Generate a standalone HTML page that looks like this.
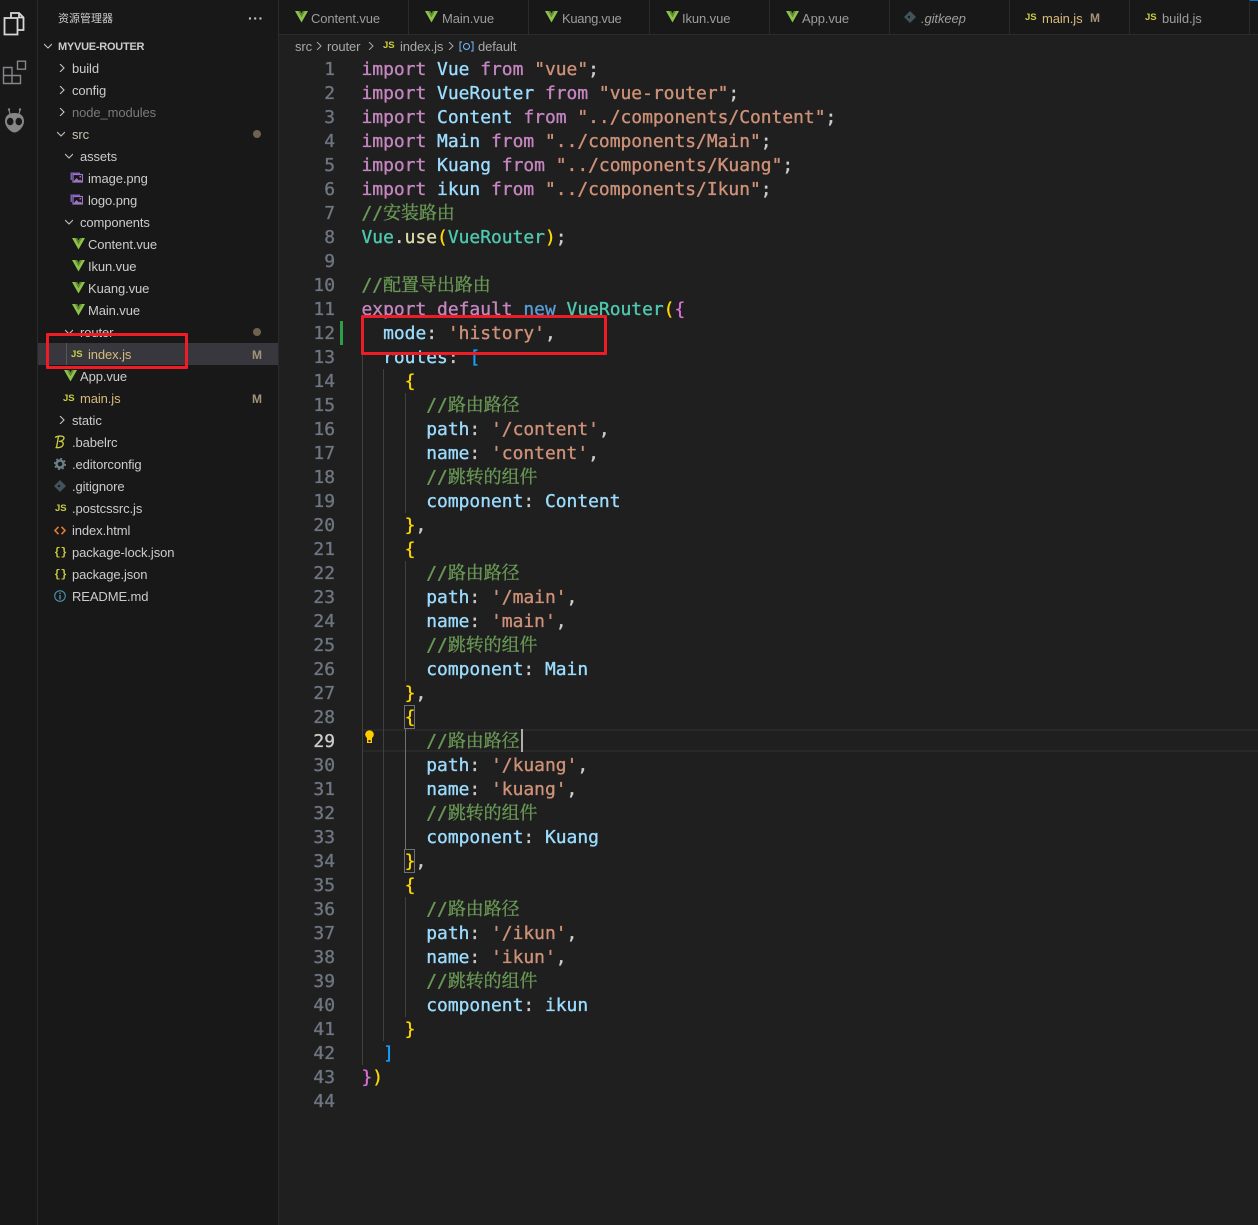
<!DOCTYPE html>
<html><head><meta charset="utf-8"><style>
html,body{margin:0;padding:0;background:#1f1f1f}
#w{position:relative;width:1258px;height:1225px;overflow:hidden;background:#1f1f1f;font-family:"Liberation Sans","Noto Sans CJK SC",sans-serif}
#ab{position:absolute;left:0;top:0;width:37px;height:1225px;background:#181818;border-right:1px solid #2b2b2b}
#sb{position:absolute;left:38px;top:0;width:240px;height:1225px;background:#181818;border-right:1px solid #2b2b2b}
.r{position:absolute;height:22px;line-height:24px;font-size:13px;color:#ccc;white-space:pre;letter-spacing:-.1px}
.a{position:absolute;width:8px;height:8px}
.t{position:absolute;top:0;height:34px;line-height:37px;font-size:13px;color:#9d9d9d;white-space:pre;letter-spacing:-.1px}
.sep{position:absolute;top:0;width:1px;height:34px;background:#2b2b2b}
.js{position:absolute;font:bold 9.5px/12px "Liberation Sans",sans-serif;color:#cbcb41;white-space:pre}
.ic{position:absolute}
.l{position:absolute;left:361.500px;height:24px;line-height:26px;font-family:"DejaVu Sans Mono","Noto Serif CJK SC",monospace;font-size:17.93px;white-space:pre;color:#ccc;-webkit-text-stroke:.35px}
.n{position:absolute;left:295px;width:40px;text-align:right;height:24px;line-height:26px;font-family:"DejaVu Sans Mono",monospace;font-size:17.93px;color:#6e7681;-webkit-text-stroke:.35px}
.g{position:absolute;width:1px;background:#404040}
.k{color:#c586c0}.v{color:#9cdcfe}.s{color:#ce9178}.c{color:#6a9955}.f{color:#4ec9b0}.y{color:#dcdcaa}.o{color:#ffd700}.m{color:#da70d6}.b{color:#179fff}.w{color:#569cd6}.d{color:#ccc}
.red{position:absolute;border:3px solid #ee1c25;box-sizing:border-box;border-radius:1px}
.dot{position:absolute;width:8px;height:8px;border-radius:50%;background:#6f6250;left:253px}
.M{position:absolute;left:252px;font:bold 12px/24px "Liberation Sans",sans-serif;color:#a39478}
</style></head><body><div id="w">
<svg width="0" height="0" style="position:absolute"><defs>
<g id="vue"><path d="M0 0H3.200L6.500 6 9.800 0H13L6.500 11.500Z" fill="#8dc149"/><path d="M3.200 0H5.200L6.500 2.500 7.800 0H9.800L6.500 6Z" fill="#5f8a2f"/></g>
<path id="chr" d="M2 0L6 4 2 8" fill="none" stroke="#c5c5c5" stroke-width="1.100"/>
<path id="chd" d="M0 2L4 6 8 2" fill="none" stroke="#c5c5c5" stroke-width="1.100"/>
<g id="img"><path d="M.5 .5H10V2H2V8H.5Z" fill="#7a5fc0"/><rect x="3" y="2.500" width="9.500" height="7.500" fill="none" stroke="#a074c4" stroke-width="1.200"/><path d="M3.500 9.500L6.500 6 9 8.500 10 7.500 12.500 9.500Z" fill="#a074c4"/><rect x="9.500" y="4" width="1.500" height="1.500" fill="#a074c4"/></g>
<g id="git"><path d="M6 0L12 6 6 12 0 6Z" fill="#41535b"/><circle cx="5" cy="6" r="1.200" fill="#181818"/></g>
</defs></svg>

<div id="ab">
<svg class="ic" style="left:3px;top:11px" width="24" height="26" viewBox="0 0 24 26" fill="none" stroke="#d7d7d7" stroke-width="1.800"><path d="M8 7V2H16L20.500 6.500V19H14.500"/><path d="M16 2V6.500H20.500"/><path d="M1.500 7H14.500V23.500H1.500Z"/></svg>
<svg class="ic" style="left:2px;top:60px" width="25" height="25" viewBox="0 0 25 25" fill="none" stroke="#85858a" stroke-width="1.400"><path d="M1.500 7.500H10V23.500H1.500ZM1.500 15.500H18.500V23.500H10"/><rect x="15.500" y="1.200" width="8" height="8"/></svg>
<svg class="ic" style="left:4px;top:107px" width="21" height="26" viewBox="0 0 21 26"><path d="M10.500 6C16 6 20 8.500 20 14.500C20 20 14 25.500 10.500 25.500C7 25.500 1 20 1 14.500C1 8.500 5 6 10.500 6Z" fill="#868686"/><ellipse cx="6.200" cy="14.500" rx="3.300" ry="3.800" fill="#181818"/><ellipse cx="14.800" cy="14.500" rx="3.300" ry="3.800" fill="#181818"/><path d="M6 7L5 3M15 7L16 3" stroke="#868686" stroke-width="1.200"/><circle cx="5" cy="2.500" r="1.200" fill="#868686"/><circle cx="16" cy="2.500" r="1.200" fill="#868686"/></svg>
</div>

<div id="sb"></div>
<div class="r" style="left:58px;top:7px;font-size:11px;letter-spacing:0">资源管理器</div>
<div class="r" style="left:248px;top:6px;font-size:14px;font-weight:bold;letter-spacing:.6px">···</div>
<svg class="a" style="left:44px;top:42px"><use href="#chd"/></svg>
<div class="r" style="left:58px;top:35px;font-size:11px;font-weight:bold;letter-spacing:-.25px">MYVUE-ROUTER</div>

<svg class="a" style="left:58px;top:64px"><use href="#chr"/></svg><div class="r" style="left:72px;top:57px">build</div>
<svg class="a" style="left:58px;top:86px"><use href="#chr"/></svg><div class="r" style="left:72px;top:79px">config</div>
<svg class="a" style="left:58px;top:108px"><use href="#chr"/></svg><div class="r" style="left:72px;top:101px;color:#7a7a7a">node_modules</div>
<svg class="a" style="left:57px;top:130px"><use href="#chd"/></svg><div class="r" style="left:72px;top:123px;color:#c8c2b4">src</div><div class="dot" style="top:130px"></div>
<svg class="a" style="left:65px;top:152px"><use href="#chd"/></svg><div class="r" style="left:80px;top:145px">assets</div>
<svg class="ic" style="left:70px;top:172px" width="13" height="11"><use href="#img"/></svg><div class="r" style="left:88px;top:167px">image.png</div>
<svg class="ic" style="left:70px;top:194px" width="13" height="11"><use href="#img"/></svg><div class="r" style="left:88px;top:189px">logo.png</div>
<svg class="a" style="left:65px;top:218px"><use href="#chd"/></svg><div class="r" style="left:80px;top:211px">components</div>
<svg class="ic" style="left:72px;top:238px" width="13" height="12"><use href="#vue"/></svg><div class="r" style="left:88px;top:233px">Content.vue</div>
<svg class="ic" style="left:72px;top:260px" width="13" height="12"><use href="#vue"/></svg><div class="r" style="left:88px;top:255px">Ikun.vue</div>
<svg class="ic" style="left:72px;top:282px" width="13" height="12"><use href="#vue"/></svg><div class="r" style="left:88px;top:277px">Kuang.vue</div>
<svg class="ic" style="left:72px;top:304px" width="13" height="12"><use href="#vue"/></svg><div class="r" style="left:88px;top:299px">Main.vue</div>
<svg class="a" style="left:65px;top:328px"><use href="#chd"/></svg><div class="r" style="left:80px;top:321px">router</div><div class="dot" style="top:328px"></div>
<div style="position:absolute;left:38px;top:343px;width:240px;height:22px;background:#37373d"></div>
<div style="position:absolute;left:66px;top:343px;width:1px;height:22px;background:#585858"></div>
<div class="js" style="left:71px;top:349px">JS</div><div class="r" style="left:88px;top:343px;color:#d7ba7d">index.js</div><div class="M" style="top:343px">M</div>
<svg class="ic" style="left:64px;top:370px" width="13" height="12"><use href="#vue"/></svg><div class="r" style="left:80px;top:365px">App.vue</div>
<div class="js" style="left:63px;top:393px">JS</div><div class="r" style="left:80px;top:387px;color:#d7ba7d">main.js</div><div class="M" style="top:387px">M</div>
<svg class="a" style="left:58px;top:416px"><use href="#chr"/></svg><div class="r" style="left:72px;top:409px">static</div>
<svg class="ic" style="left:54px;top:435px" width="12" height="14" viewBox="0 0 12 14" fill="none" stroke="#cbcb41" stroke-width="1.300"><path d="M1 2.500C4 .5 10 .5 10 3C10 5 7 6.500 5 6.500C8 6 10 7.500 9 10C8 12.500 4 13 1.500 12.500M4.500 1.500L2.500 12.500"/></svg><div class="r" style="left:72px;top:431px">.babelrc</div>
<svg class="ic" style="left:54px;top:458px" width="12" height="12" viewBox="0 0 12 12"><circle cx="6" cy="6" r="3.500" fill="none" stroke="#6d8086" stroke-width="2.400"/><circle cx="6" cy="6" r="5.300" fill="none" stroke="#6d8086" stroke-width="1.500" stroke-dasharray="2 2.160"/></svg><div class="r" style="left:72px;top:453px">.editorconfig</div>
<svg class="ic" style="left:54px;top:480px" width="12" height="12"><use href="#git"/></svg><div class="r" style="left:72px;top:475px">.gitignore</div>
<div class="js" style="left:55px;top:503px">JS</div><div class="r" style="left:72px;top:497px">.postcssrc.js</div>
<svg class="ic" style="left:54px;top:526px" width="12" height="9" viewBox="0 0 12 9" fill="none" stroke="#e37933" stroke-width="1.600"><path d="M4.500 .8L1 4.500 4.500 8.200M7.500 .8L11 4.500 7.500 8.200"/></svg><div class="r" style="left:72px;top:519px">index.html</div>
<div class="r" style="left:54px;top:541px;color:#cbcb41;font:bold 11px/24px 'Liberation Mono',monospace">{}</div><div class="r" style="left:72px;top:541px">package-lock.json</div>
<div class="r" style="left:54px;top:563px;color:#cbcb41;font:bold 11px/24px 'Liberation Mono',monospace">{}</div><div class="r" style="left:72px;top:563px">package.json</div>
<svg class="ic" style="left:54px;top:590px" width="12" height="12" viewBox="0 0 12 12"><circle cx="6" cy="6" r="5.300" fill="none" stroke="#519aba" stroke-width="1"/><path d="M6 5V9.500M6 2.500V4" stroke="#519aba" stroke-width="1.300"/></svg><div class="r" style="left:72px;top:585px">README.md</div>

<div style="position:absolute;left:279px;top:0;width:979px;height:34px;background:#181818;border-bottom:1px solid #2b2b2b"></div>
<div style="position:absolute;left:1250px;top:0;width:8px;height:1px;background:#0078d4"></div>
<div class="sep" style="left:408px"></div><div class="sep" style="left:528px"></div><div class="sep" style="left:649px"></div><div class="sep" style="left:769px"></div><div class="sep" style="left:889px"></div><div class="sep" style="left:1009px"></div><div class="sep" style="left:1129px"></div><div class="sep" style="left:1249px"></div>
<svg class="ic" style="left:295px;top:11px" width="13" height="12"><use href="#vue"/></svg><div class="t" style="left:311px">Content.vue</div>
<svg class="ic" style="left:425px;top:11px" width="13" height="12"><use href="#vue"/></svg><div class="t" style="left:442px">Main.vue</div>
<svg class="ic" style="left:545px;top:11px" width="13" height="12"><use href="#vue"/></svg><div class="t" style="left:562px;letter-spacing:-.3px">Kuang.vue</div>
<svg class="ic" style="left:666px;top:11px" width="13" height="12"><use href="#vue"/></svg><div class="t" style="left:682px">Ikun.vue</div>
<svg class="ic" style="left:786px;top:11px" width="13" height="12"><use href="#vue"/></svg><div class="t" style="left:802px">App.vue</div>
<svg class="ic" style="left:904px;top:11px" width="12" height="12"><use href="#git"/></svg><div class="t" style="left:921px;font-style:italic">.gitkeep</div>
<div class="js" style="left:1025px;top:12px">JS</div><div class="t" style="left:1042px;color:#d7ba7d">main.js</div><div class="t" style="left:1090px;color:#a39478;font-weight:bold;font-size:12px">M</div>
<div class="js" style="left:1145px;top:12px">JS</div><div class="t" style="left:1162px">build.js</div>

<div class="t" style="left:295px;top:28px;color:#a9a9a9">src</div>
<div class="t" style="left:327px;top:28px;color:#a9a9a9">router</div>
<svg class="a" style="left:315px;top:42px"><path d="M2 0L6 4 2 8" fill="none" stroke="#a9a9a9"/></svg>
<svg class="a" style="left:367px;top:42px"><path d="M2 0L6 4 2 8" fill="none" stroke="#a9a9a9"/></svg>
<div class="js" style="left:383px;top:40px">JS</div>
<div class="t" style="left:400px;top:28px;color:#a9a9a9">index.js</div>
<svg class="a" style="left:447px;top:42px"><path d="M2 0L6 4 2 8" fill="none" stroke="#a9a9a9"/></svg>
<svg class="ic" style="left:459px;top:41px" width="15" height="11" viewBox="0 0 15 11" fill="none" stroke="#75beff"><path d="M3 1H1V10H3M12 1H14V10H12"/><circle cx="7.500" cy="5.500" r="3"/></svg>
<div class="t" style="left:478px;top:28px;color:#a9a9a9">default</div>

<div style="position:absolute;left:362px;top:729px;width:896px;height:23px;box-sizing:border-box;border-top:2px solid #282828;border-bottom:2px solid #282828"></div>
<div class="g" style="left:362px;top:321px;height:744px"></div>
<div class="g" style="left:383px;top:369px;height:672px"></div>
<div class="g" style="left:405px;top:393px;height:120px"></div>
<div class="g" style="left:405px;top:561px;height:120px"></div>
<div class="g" style="left:405px;top:729px;height:120px;background:#707070"></div>
<div class="g" style="left:405px;top:897px;height:120px"></div>
<div style="position:absolute;left:340px;top:321px;width:3px;height:24px;background:#2ea043"></div>

<div class="n" style="top:57px">1</div><div class="n" style="top:81px">2</div><div class="n" style="top:105px">3</div><div class="n" style="top:129px">4</div><div class="n" style="top:153px">5</div><div class="n" style="top:177px">6</div><div class="n" style="top:201px">7</div><div class="n" style="top:225px">8</div><div class="n" style="top:249px">9</div><div class="n" style="top:273px">10</div><div class="n" style="top:297px">11</div><div class="n" style="top:321px">12</div><div class="n" style="top:345px">13</div><div class="n" style="top:369px">14</div><div class="n" style="top:393px">15</div><div class="n" style="top:417px">16</div><div class="n" style="top:441px">17</div><div class="n" style="top:465px">18</div><div class="n" style="top:489px">19</div><div class="n" style="top:513px">20</div><div class="n" style="top:537px">21</div><div class="n" style="top:561px">22</div><div class="n" style="top:585px">23</div><div class="n" style="top:609px">24</div><div class="n" style="top:633px">25</div><div class="n" style="top:657px">26</div><div class="n" style="top:681px">27</div><div class="n" style="top:705px">28</div><div class="n" style="top:729px;color:#ccc">29</div><div class="n" style="top:753px">30</div><div class="n" style="top:777px">31</div><div class="n" style="top:801px">32</div><div class="n" style="top:825px">33</div><div class="n" style="top:849px">34</div><div class="n" style="top:873px">35</div><div class="n" style="top:897px">36</div><div class="n" style="top:921px">37</div><div class="n" style="top:945px">38</div><div class="n" style="top:969px">39</div><div class="n" style="top:993px">40</div><div class="n" style="top:1017px">41</div><div class="n" style="top:1041px">42</div><div class="n" style="top:1065px">43</div><div class="n" style="top:1089px">44</div>

<div class="l" style="top:57px"><span class="k">import</span> <span class="v">Vue</span> <span class="k">from</span> <span class="s">"vue"</span>;</div>
<div class="l" style="top:81px"><span class="k">import</span> <span class="v">VueRouter</span> <span class="k">from</span> <span class="s">"vue-router"</span>;</div>
<div class="l" style="top:105px"><span class="k">import</span> <span class="v">Content</span> <span class="k">from</span> <span class="s">"../components/Content"</span>;</div>
<div class="l" style="top:129px"><span class="k">import</span> <span class="v">Main</span> <span class="k">from</span> <span class="s">"../components/Main"</span>;</div>
<div class="l" style="top:153px"><span class="k">import</span> <span class="v">Kuang</span> <span class="k">from</span> <span class="s">"../components/Kuang"</span>;</div>
<div class="l" style="top:177px"><span class="k">import</span> <span class="v">ikun</span> <span class="k">from</span> <span class="s">"../components/Ikun"</span>;</div>
<div class="l c" style="top:201px">//安装路由</div>
<div class="l" style="top:225px"><span class="f">Vue</span>.<span class="y">use</span><span class="o">(</span><span class="f">VueRouter</span><span class="o">)</span>;</div>
<div class="l c" style="top:273px">//配置导出路由</div>
<div class="l" style="top:297px"><span class="k">export</span> <span class="k">default</span> <span class="w">new</span> <span class="f">VueRouter</span><span class="o">(</span><span class="m">{</span></div>
<div class="l" style="top:321px">  <span class="v">mode</span>: <span class="s">'history'</span>,</div>
<div class="l" style="top:345px">  <span class="v">routes</span>: <span class="b">[</span></div>
<div class="l" style="top:369px">    <span class="o">{</span></div>
<div class="l c" style="top:393px">      //路由路径</div>
<div class="l" style="top:417px">      <span class="v">path</span>: <span class="s">'/content'</span>,</div>
<div class="l" style="top:441px">      <span class="v">name</span>: <span class="s">'content'</span>,</div>
<div class="l c" style="top:465px">      //跳转的组件</div>
<div class="l" style="top:489px">      <span class="v">component</span>: <span class="v">Content</span></div>
<div class="l" style="top:513px">    <span class="o">}</span>,</div>
<div class="l" style="top:537px">    <span class="o">{</span></div>
<div class="l c" style="top:561px">      //路由路径</div>
<div class="l" style="top:585px">      <span class="v">path</span>: <span class="s">'/main'</span>,</div>
<div class="l" style="top:609px">      <span class="v">name</span>: <span class="s">'main'</span>,</div>
<div class="l c" style="top:633px">      //跳转的组件</div>
<div class="l" style="top:657px">      <span class="v">component</span>: <span class="v">Main</span></div>
<div class="l" style="top:681px">    <span class="o">}</span>,</div>
<div class="l" style="top:705px">    <span class="o">{</span></div>
<div class="l c" style="top:729px">      //路由路径</div>
<div class="l" style="top:753px">      <span class="v">path</span>: <span class="s">'/kuang'</span>,</div>
<div class="l" style="top:777px">      <span class="v">name</span>: <span class="s">'kuang'</span>,</div>
<div class="l c" style="top:801px">      //跳转的组件</div>
<div class="l" style="top:825px">      <span class="v">component</span>: <span class="v">Kuang</span></div>
<div class="l" style="top:849px">    <span class="o">}</span>,</div>
<div class="l" style="top:873px">    <span class="o">{</span></div>
<div class="l c" style="top:897px">      //路由路径</div>
<div class="l" style="top:921px">      <span class="v">path</span>: <span class="s">'/ikun'</span>,</div>
<div class="l" style="top:945px">      <span class="v">name</span>: <span class="s">'ikun'</span>,</div>
<div class="l c" style="top:969px">      //跳转的组件</div>
<div class="l" style="top:993px">      <span class="v">component</span>: <span class="v">ikun</span></div>
<div class="l" style="top:1017px">    <span class="o">}</span></div>
<div class="l" style="top:1041px">  <span class="b">]</span></div>
<div class="l" style="top:1065px"><span class="m">}</span><span class="o">)</span></div>

<div style="position:absolute;left:404px;top:705px;width:11px;height:24px;box-sizing:border-box;border:1px solid #707070"></div>
<div style="position:absolute;left:404px;top:849px;width:11px;height:24px;box-sizing:border-box;border:1px solid #707070"></div>
<div style="position:absolute;left:521px;top:729px;width:1.500px;height:23px;background:#aeafad"></div>
<svg class="ic" style="left:364px;top:730px" width="11" height="14" viewBox="0 0 11 14"><circle cx="5.500" cy="4.500" r="4.300" fill="#ffcc00"/><rect x="3" y="8" width="5" height="5" fill="#ffcc00"/><rect x="4.500" y="10" width="2" height="2" fill="#1f1f1f"/></svg>

<div class="red" style="left:46px;top:333px;width:142px;height:36px"></div>
<div class="red" style="left:361px;top:315px;width:246px;height:40px"></div>
</div></body></html>
